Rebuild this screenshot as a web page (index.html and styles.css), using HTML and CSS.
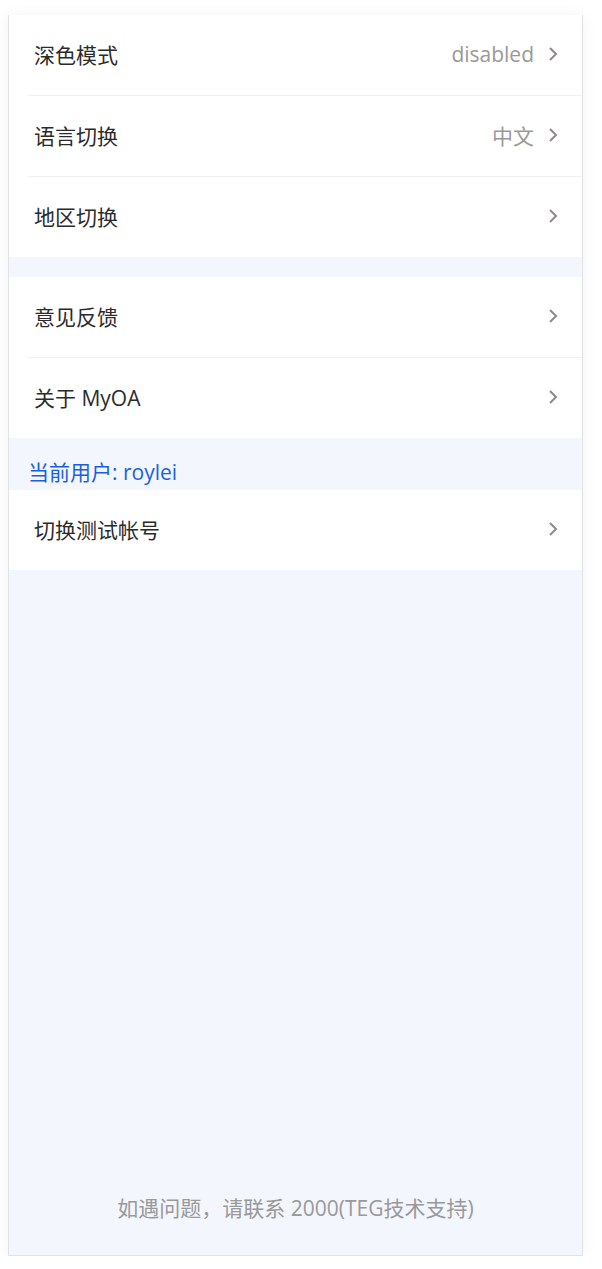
FILE: index.html
```html
<!DOCTYPE html>
<html lang="zh-CN">
<head>
<meta charset="utf-8">
<title>设置</title>
<link rel="stylesheet" href="styles.css">
</head>
<body>
<div class="page">
  <div class="group">
    <div class="row">
      <span class="label">深色模式</span>
      <span class="value">disabled</span>
      <svg class="chev" viewBox="0 0 10 16" width="10" height="16"><path d="M2 2 L8 8 L2 14"/></svg>
    </div>
    <div class="row">
      <span class="label">语言切换</span>
      <span class="value">中文</span>
      <svg class="chev" viewBox="0 0 10 16" width="10" height="16"><path d="M2 2 L8 8 L2 14"/></svg>
    </div>
    <div class="row">
      <span class="label">地区切换</span>
      <span class="value"></span>
      <svg class="chev" viewBox="0 0 10 16" width="10" height="16"><path d="M2 2 L8 8 L2 14"/></svg>
    </div>
  </div>
  <div class="gap"></div>
  <div class="group">
    <div class="row">
      <span class="label">意见反馈</span>
      <span class="value"></span>
      <svg class="chev" viewBox="0 0 10 16" width="10" height="16"><path d="M2 2 L8 8 L2 14"/></svg>
    </div>
    <div class="row">
      <span class="label">关于 MyOA</span>
      <span class="value"></span>
      <svg class="chev" viewBox="0 0 10 16" width="10" height="16"><path d="M2 2 L8 8 L2 14"/></svg>
    </div>
  </div>
  <div class="user">当前用户: roylei</div>
  <div class="group">
    <div class="row">
      <span class="label">切换测试帐号</span>
      <span class="value"></span>
      <svg class="chev" viewBox="0 0 10 16" width="10" height="16"><path d="M2 2 L8 8 L2 14"/></svg>
    </div>
  </div>
  <div class="spacer"></div>
  <div class="footer">如遇问题，请联系 2000(TEG技术支持)</div>
</div>
</body>
</html>
```
FILE: styles.css
```css
html, body {
  margin: 0;
  padding: 0;
  background: #ffffff;
}
body {
  padding: 15px 0 0 8px;
  font-family: "Open Sans", "Noto Sans CJK SC", sans-serif;
}
.page {
  width: 573px;
  height: 1240px;
  border: 1px solid #e2e2e2;
  border-top: none;
  background: #f3f6fd;
  display: flex;
  flex-direction: column;
  box-shadow: 0 0 14px rgba(0, 0, 0, 0.05);
}
.group {
  background: #ffffff;
}
.row {
  height: 78px;
  margin-left: 19px;
  padding-left: 6px;
  padding-right: 24px;
  padding-bottom: 2px;
  display: flex;
  align-items: center;
  border-top: 1px solid #f0f0f0;
}
.row:first-child {
  border-top: none;
}
.label {
  font-size: 21px;
  color: #2b2b2b;
  flex: 1;
}
.value {
  font-size: 21px;
  color: #999999;
  margin-right: 14px;
}
.chev {
  fill: none;
  stroke: #8f8a8a;
  stroke-width: 2;
}
.gap {
  height: 20px;
}
.user {
  height: 52px;
  box-sizing: border-box;
  padding-left: 19px;
  display: flex;
  align-items: flex-end;
  padding-bottom: 4px;
  font-size: 21px;
  color: #1a5fe0;
}
.spacer {
  flex: 1;
}
.footer {
  text-align: center;
  font-size: 21px;
  color: #999999;
  padding-bottom: 33px;
}
```
